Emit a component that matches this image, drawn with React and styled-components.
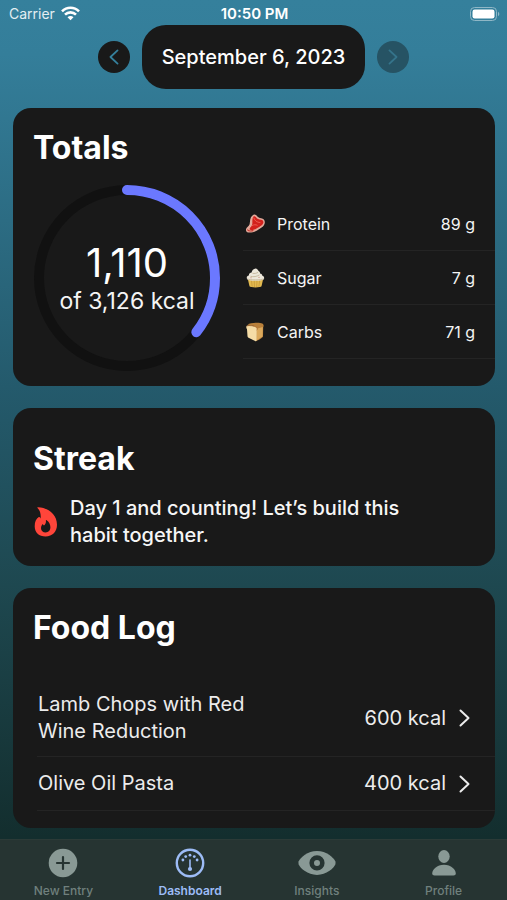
import React from "react";
import styled, { createGlobalStyle } from "styled-components";

const GlobalStyle = createGlobalStyle`
  * { box-sizing: border-box; }
  body {
    margin: 0;
    background: #14302f;
    color: #f4f4f4;
    font-family: Inter, "Liberation Sans", sans-serif;
  }
  h1, h2, p, ul, dl, dd { margin: 0; padding: 0; }
  ul { list-style: none; }
  button { font: inherit; color: inherit; border: 0; padding: 0; background: none; cursor: pointer; }
  svg { display: block; flex: none; }
`;

const Screen = styled.div`
  min-height: 100vh;
  display: flex;
  flex-direction: column;
  background: linear-gradient(#35809c 0, #347e9a 6%, #245a6c 43%, #1e4850 65%, #132e2e 93%);
`;

const StatusBar = styled.header`
  display: grid;
  grid-template-columns: 1fr auto 1fr;
  align-items: center;
  height: 25px;
  padding: 2px 7px 0 9px;
  font-size: 14px;
  line-height: 20px;
  color: #fff;
`;

const Carrier = styled.div`
  display: flex;
  align-items: center;
  gap: 6px;
  color: #e3eef2;
`;

const Clock = styled.time`
  font-size: 15px;
  font-weight: 600;
`;

const BatterySlot = styled.div`
  justify-self: end;
`;

const DateNav = styled.nav`
  display: flex;
  justify-content: center;
  align-items: center;
  gap: 12px;
`;

const RoundButton = styled.button`
  width: 32px;
  height: 32px;
  border-radius: 50%;
  display: grid;
  place-items: center;
  background: #191919;
  color: #35809c;
  &:disabled { background: #265364; color: #35748b; cursor: default; }
`;

const DateButton = styled.button`
  height: 64px;
  padding: 0 20px;
  border-radius: 24px;
  background: #191919;
  font-size: 20px;
  font-weight: 500;
  color: #fff;
`;

const Cards = styled.main`
  display: flex;
  flex-direction: column;
  gap: 22px;
  padding: 19px 12px 11px 13px;
`;

const Card = styled.section`
  background: #191919;
  border-radius: 18px;
  overflow: hidden;
  padding: ${(p) => p.$top}px 0 ${(p) => p.$bottom}px 20px;
`;

const Title = styled.h2`
  font-size: 32px;
  line-height: 40px;
  font-weight: 700;
  color: #fff;
`;

const TotalsBody = styled.div`
  display: flex;
  align-items: center;
  gap: 22px;
  margin-top: 16px;
`;

const Ring = styled.div`
  display: grid;
  place-items: center;
  width: 188px;
  height: 188px;
  flex: none;
  > * { grid-area: 1 / 1; }
`;

const RingText = styled.div`
  text-align: center;
  font-size: 23px;
  line-height: 30px;
`;

const Consumed = styled.div`
  font-size: 40px;
  line-height: 46px;
  color: #fff;
`;

const Nutrients = styled.dl`
  flex: 1;
  min-width: 0;
`;

const Nutrient = styled.div`
  display: flex;
  align-items: center;
  height: 54px;
  padding: 0 20px 0 2px;
  border-bottom: 1px solid #242424;
  font-size: 16px;
`;

const NutrientName = styled.dt`
  display: flex;
  align-items: center;
  gap: 11px;
`;

const NutrientValue = styled.dd`
  && { margin-left: auto; }
`;

const StreakRow = styled.div`
  display: flex;
  align-items: center;
  gap: 12px;
  margin-top: 16px;
  padding: 0 80px 0 1px;
`;

const StreakText = styled.p`
  font-size: 20px;
  line-height: 27px;
  font-weight: 500;
  color: #f6f6f6;
`;

const LogList = styled.ul`
  margin-top: 32px;
  padding-left: 4px;
`;

const LogItem = styled.li`
  border-bottom: 1px solid #242424;
`;

const LogButton = styled.button`
  width: 100%;
  min-height: 53px;
  display: flex;
  align-items: center;
  gap: 13px;
  padding: 11px 25px 11px 1px;
  text-align: left;
  font-size: 20px;
  line-height: 27px;
  color: #ececec;
`;

const LogName = styled.span`
  width: 220px;
  margin-right: auto;
`;

const TabBar = styled.nav`
  display: grid;
  grid-template-columns: repeat(4, 1fr);
  margin-top: auto;
  height: 61px;
  border-top: 1px solid #2b3a37;
  background: #263432;
`;

const Tab = styled.button`
  display: flex;
  flex-direction: column;
  align-items: center;
  gap: 5px;
  padding-top: 8px;
  font-size: 12px;
  line-height: 16px;
  font-weight: ${(p) => (p.$active ? 600 : 500)};
  color: ${(p) => (p.$active ? "#9dbcf6" : "#70807d")};
  svg { color: ${(p) => (p.$active ? "#9dbcf6" : "#899995")}; }
`;

const Wifi = () => (
  <svg width="19" height="15" viewBox="0 0 19 15" fill="none" stroke="#fff" strokeWidth="2.6" aria-hidden="true">
    <path d="M1 5.400C5.800.6 13.200.6 18 5.400" />
    <path d="M4 8.700c3.100-3.100 7.900-3.100 11 0" />
    <path d="M9.500 14.300 6.500 11.300c1.700-1.600 4.300-1.600 6 0z" fill="#fff" stroke="none" />
  </svg>
);

const Battery = () => (
  <svg width="30" height="14" viewBox="0 0 30 14" role="img" aria-label="Battery full">
    <rect x="0.5" y="0.5" width="26" height="13" rx="4" fill="none" stroke="#8fb7c6" />
    <rect x="2.5" y="2.5" width="22" height="9" rx="2.2" fill="#fff" />
    <path d="M28 4.800c1.800.7 1.800 3.700 0 4.400z" fill="#8fb7c6" />
  </svg>
);

const Chevron = ({ left, width = 11, height = 18 }) => (
  <svg width={width} height={height} viewBox="0 0 11 18" fill="none" stroke="currentColor" strokeWidth="2" strokeLinecap="round" strokeLinejoin="round" aria-hidden="true">
    <path d={left ? "M9.5 1.5 1.5 9l8 7.5" : "M1.5 1.5 9.5 9l-8 7.5"} />
  </svg>
);

const Steak = () => (
  <svg width="21" height="20" viewBox="0 0 21 20" aria-hidden="true">
    <path d="M8.500.8c1.700-.6 2.700.2 3.700 1.500 1 1.300 2 1.600 4 1.900 2.700.4 4 2.200 3.500 5-.5 2.900-2.500 4-4.600 5.200-2.600 1.500-4.200 3-7.300 3.800-3 .8-6.500.6-6.800-1.800-.2-1.700.8-2.800 2-3.900 1.600-1.500 1.700-2.300 1.900-4.500C5.200 4.700 6 1.900 8.500.8z" fill="#e3a99a" />
    <path d="M8.900 2.300c1-.4 1.500.2 2.300 1.300 1 1.400 2.600 1.900 4.700 2.200 2 .3 2.800 1.400 2.400 3.200-.5 2-2.300 2.800-4.100 3.900-2.500 1.500-4 2.600-6.500 3-1.800.3-3.500-.2-3-1.300.4-1 1.700-1.700 2.300-3.500.6-1.700.2-3.100.4-5 .2-1.700.5-3.400 1.500-3.800z" fill="#d3211c" />
    <path d="M8.800 4c1 3 3 4.200 6.200 4.600M7.200 11.500c1.800-1 3.600-1 5-.3" fill="none" stroke="#f0695c" strokeWidth="0.8" strokeLinecap="round" />
    <path d="M2.600 15.900c1 1 3.300 1.200 5.400.7" fill="none" stroke="#c83a31" strokeWidth="1.1" strokeLinecap="round" />
  </svg>
);

const Cupcake = () => (
  <svg width="21" height="20" viewBox="0 0 21 20" aria-hidden="true">
    <path d="M2.700 10.500h15.600L16.500 18.300c-.3 1.500-11.700 1.500-12 0z" fill="#e2b94f" />
    <path d="M6.400 12l.8 6.600M9.200 12l.3 7M12 12l-.3 7M14.700 12l-.8 6.600" stroke="#c29436" strokeWidth="0.7" />
    <path d="M1.800 10.200c-.3-1.700.8-2.600 2-2.800C3.900 5.600 5.200 4.700 6.600 4.600 6.800 2.700 8.700.7 10.600.6c1.600 0 1.900 1.400 3 2.300 1.200.8 1.500 1.500 1.400 2.500 1.600.2 2.400 1.200 2.300 2.400 1.400.4 2.100 1.400 1.800 2.700-.5 1.900-3.900 2.300-8.700 2.300-4.700 0-8.200-.6-8.600-2.600z" fill="#ece7da" />
    <path d="M2.300 10.800c2 1.500 14.300 1.500 16.300 0M5.500 8.300c3 .8 6.200.3 9-1.400M7.500 5.300c2 .4 3.800.1 5.500-1" stroke="#b9a988" strokeWidth="0.7" fill="none" />
    <circle cx="6" cy="9.700" r=".5" fill="#bd6351" /><circle cx="14" cy="9.300" r=".5" fill="#bd6351" />
  </svg>
);

const Bread = () => (
  <svg width="21" height="20" viewBox="0 0 21 20" aria-hidden="true">
    <path d="M2.500 2.600C5.500.6 14.500.2 17.300 1.500c1.500.8 1.600 2.700.9 3.700L18 14.600c-.1 1-5 4.200-7 4.600L9 4z" fill="#b9803a" />
    <path d="M11.500 6.800 17.800 5l-.3 9.500-6 3.900z" fill="#dba95c" />
    <path d="M2 3.800c2.300-.8 7.300 0 9.200 1.300 1.200.9 1.200 2.400.5 3.100l-.1 10c0 .9-.6 1.200-1.500.8l-6.600-3.300c-.7-.4-1-.8-1-1.500L2 7.300C1.100 6.400.9 4.300 2 3.800z" fill="#f5dca6" />
    <path d="M1.800 3.900C4 3 9.300 3.800 11.200 5.100c1.200.9 1.200 2.400.5 3.100" fill="none" stroke="#a9662b" strokeWidth="0.8" />
  </svg>
);

const Flame = () => (
  <svg width="24" height="30" viewBox="0 0 24 30" aria-hidden="true">
    <path fillRule="evenodd" fill="#ff453a" d="M3.500.9C3.200.4 3.600.1 4.100.2 14 .6 23 7.200 23 17.800c0 6.900-4.600 11.700-11.400 11.700C4.900 29.500.7 25.400.7 19.200c0-4.200 1.500-7.600 4.100-9.100.6-.3 1-.1 1.200.5.100.4.300.7.600.9C7 7.800 6.600 4.200 3.500.9zM12.600 13.200c-.4-.3-.8-.1-.7.4.3 2.100-.6 3.600-1.900 4.900-.5-.3-.7-.6-.9-1-.2-.4-.6-.4-.9-.1-.8 1-1.200 2.200-1.200 3.500 0 2.800 2 4.600 4.600 4.600 2.900 0 4.800-2.100 4.800-5.200 0-3.100-1.400-5.500-3.800-7.100z" />
  </svg>
);

const PlusIcon = () => (
  <svg width="30" height="30" viewBox="0 0 30 30" aria-hidden="true">
    <circle cx="15" cy="15" r="14.3" fill="currentColor" />
    <path d="M15 9v12M9 15h12" stroke="#263432" strokeWidth="2.2" strokeLinecap="round" />
  </svg>
);

const GaugeIcon = () => (
  <svg width="30" height="30" viewBox="0 0 30 30" aria-hidden="true">
    <circle cx="15" cy="15" r="13.2" fill="none" stroke="currentColor" strokeWidth="2.4" />
    <path d="M15 12v9" stroke="currentColor" strokeWidth="1.6" strokeLinecap="round" />
    <circle cx="15" cy="21" r="2.1" fill="currentColor" />
    {[[7.9, 12], [10.7, 8.6], [15, 7.2], [19.3, 8.6], [22.1, 12]].map(([x, y]) => (
      <circle key={x} cx={x} cy={y} r="1.4" fill="currentColor" />
    ))}
  </svg>
);

const EyeIcon = () => (
  <svg width="38" height="30" viewBox="0 0 38 30" aria-hidden="true">
    <path d="M19 2.900C9.500 2.900 2.300 9.500.7 13.300c-.4 1-.4 2.200 0 3.200C2.300 20.300 9.500 26.900 19 26.900s16.700-6.600 18.300-10.400c.4-1 .4-2.200 0-3.200C35.700 9.500 28.500 2.900 19 2.900z" fill="currentColor" />
    <circle cx="19" cy="14.900" r="5.300" fill="none" stroke="#263432" strokeWidth="4.6" />
  </svg>
);

const PersonIcon = () => (
  <svg width="30" height="30" viewBox="0 0 30 30" fill="currentColor" aria-hidden="true">
    <ellipse cx="15" cy="8.5" rx="5.7" ry="6.4" />
    <path d="M5.500 27.400c-1.400 0-2.300-.7-2.300-2 0-3.800 4.700-8.600 11.800-8.600s11.800 4.800 11.800 8.600c0 1.300-.9 2-2.300 2z" />
  </svg>
);

const RADIUS = 88;
const LENGTH = 2 * Math.PI * RADIUS;

const ProgressRing = ({ value, goal }) => (
  <Ring>
    <svg width="188" height="188" viewBox="0 0 188 188" fill="none" strokeWidth="10" aria-hidden="true">
      <circle cx="94" cy="94" r={RADIUS} stroke="#111" />
      <circle
        cx="94" cy="94" r={RADIUS} stroke="#6b78ff" strokeLinecap="round"
        strokeDasharray={`${(value / goal) * LENGTH} ${LENGTH}`}
        transform="rotate(-90 94 94)"
      />
    </svg>
    <RingText>
      <Consumed>{value.toLocaleString("en-US")}</Consumed>
      of {goal.toLocaleString("en-US")} kcal
    </RingText>
  </Ring>
);

const nutrients = [
  { name: "Protein", value: "89 g", Icon: Steak },
  { name: "Sugar", value: "7 g", Icon: Cupcake },
  { name: "Carbs", value: "71 g", Icon: Bread },
];

const log = [
  { name: "Lamb Chops with Red Wine Reduction", kcal: 600 },
  { name: "Olive Oil Pasta", kcal: 400 },
];

const tabs = [
  { name: "New Entry", Icon: PlusIcon },
  { name: "Dashboard", Icon: GaugeIcon, active: true },
  { name: "Insights", Icon: EyeIcon },
  { name: "Profile", Icon: PersonIcon },
];

export default function App() {
  return (
    <Screen>
      <GlobalStyle />
      <StatusBar>
        <Carrier>Carrier <Wifi /></Carrier>
        <Clock>10:50 PM</Clock>
        <BatterySlot><Battery /></BatterySlot>
      </StatusBar>
      <DateNav aria-label="Date">
        <RoundButton aria-label="Previous day"><Chevron left width={10} height={16} /></RoundButton>
        <DateButton>September 6, 2023</DateButton>
        <RoundButton aria-label="Next day" disabled><Chevron width={10} height={16} /></RoundButton>
      </DateNav>
      <Cards>
        <Card $top={20} $bottom={14}>
          <Title>Totals</Title>
          <TotalsBody>
            <ProgressRing value={1110} goal={3126} />
            <Nutrients>
              {nutrients.map(({ name, value, Icon }) => (
                <Nutrient key={name}>
                  <NutrientName><Icon />{name}</NutrientName>
                  <NutrientValue>{value}</NutrientValue>
                </Nutrient>
              ))}
            </Nutrients>
          </TotalsBody>
        </Card>
        <Card $top={31} $bottom={17}>
          <Title>Streak</Title>
          <StreakRow>
            <Flame />
            <StreakText>Day 1 and counting! Let’s build this habit together.</StreakText>
          </StreakRow>
        </Card>
        <Card $top={20} $bottom={17}>
          <Title>Food Log</Title>
          <LogList>
            {log.map(({ name, kcal }) => (
              <LogItem key={name}>
                <LogButton>
                  <LogName>{name}</LogName>
                  <span>{kcal} kcal</span>
                  <Chevron />
                </LogButton>
              </LogItem>
            ))}
          </LogList>
        </Card>
      </Cards>
      <TabBar aria-label="Sections">
        {tabs.map(({ name, Icon, active }) => (
          <Tab key={name} $active={active} aria-current={active ? "page" : undefined}>
            <Icon />{name}
          </Tab>
        ))}
      </TabBar>
    </Screen>
  );
}
